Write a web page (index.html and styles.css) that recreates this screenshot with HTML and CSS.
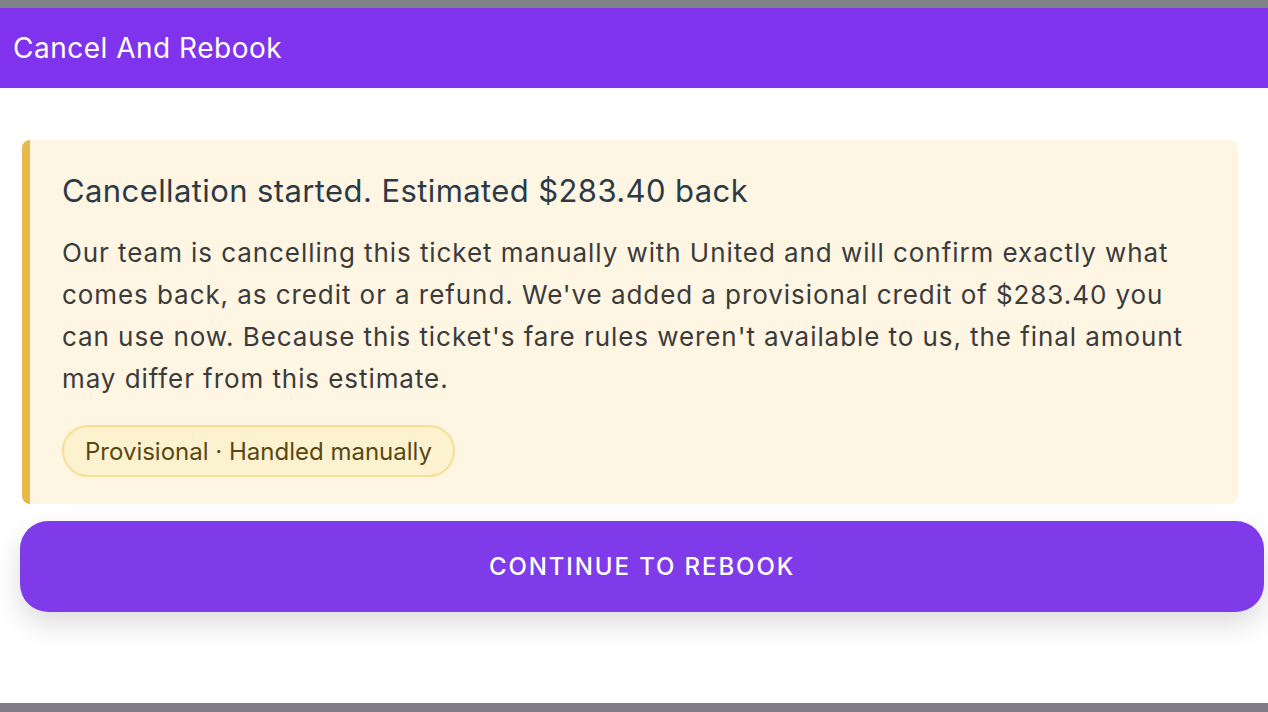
FILE: index.html
```html
<!DOCTYPE html>
<html>
<head>
<meta charset="utf-8">
<link rel="stylesheet" href="styles.css">
</head>
<body>
<div class="backdrop-top"></div>
<div class="sheet">
  <header class="app-bar">
    <h1 class="app-title">Cancel And Rebook</h1>
  </header>
  <main class="content">
    <section class="notice">
      <h2 class="notice-title">Cancellation started. Estimated $283.40 back</h2>
      <p class="notice-body">Our team is cancelling this ticket manually with United and will confirm exactly what comes back, as credit or a refund. We've added a provisional credit of $283.40 you can use now. Because this ticket's fare rules weren't available to us, the final amount may differ from this estimate.</p>
      <span class="chip">Provisional · Handled manually</span>
    </section>
    <div class="footer">
      <button class="primary-btn">CONTINUE TO REBOOK</button>
    </div>
  </main>
</div>
<div class="backdrop-bottom"></div>
</body>
</html>
```

FILE: styles.css
```css
* { box-sizing: border-box; }
html, body { margin: 0; padding: 0; }
body {
  width: 1268px;
  height: 712px;
  overflow: hidden;
  font-family: Inter, "Noto Sans", sans-serif;
  background: #ffffff;
  display: flex;
  flex-direction: column;
}
.backdrop-top {
  height: 8px;
  background: #7f8387;
  flex: none;
}
.sheet {
  height: 695px;
  flex: none;
  background: #ffffff;
  display: flex;
  flex-direction: column;
}
.app-bar {
  height: 80px;
  background: #8033ec;
  display: flex;
  align-items: center;
  padding-left: 13px;
  flex: none;
}
.app-title {
  margin: 0;
  color: #ffffff;
  font-size: 28px;
  font-weight: 400;
  letter-spacing: 0.5px;
}
.content {
  padding: 52px 4px 0 20px;
  display: flex;
  flex-direction: column;
}
.notice {
  margin: 0 26px 0 2px;
  background: #fef6e3;
  border-left: 8px solid #e8b84a;
  border-radius: 8px;
  padding: 30px 32px 27px 32px;
  display: flex;
  flex-direction: column;
  align-items: flex-start;
}
.notice-title {
  margin: 0;
  font-size: 31px;
  font-weight: 400;
  color: #2c3a47;
  line-height: 42px;
  letter-spacing: 0.4px;
}
.notice-body {
  margin: 20px 0 25px;
  font-size: 26px;
  line-height: 42px;
  color: #3b3b3b;
  letter-spacing: 0.93px;
}
.chip {
  display: inline-flex;
  align-items: center;
  height: 52px;
  padding: 0 21px;
  border: 2px solid #f6df93;
  background: #fdf2cf;
  border-radius: 26px;
  font-size: 24px;
  color: #574812;
}
.footer {
  margin-top: 17px;
}
.primary-btn {
  width: 100%;
  height: 91px;
  border: none;
  border-radius: 28px;
  background: #7f3ae9;
  color: #ffffff;
  font-family: Inter, "Noto Sans", sans-serif;
  font-size: 24px;
  font-weight: 500;
  letter-spacing: 1.9px;
  box-shadow: 0 12px 28px rgba(0, 0, 0, 0.14);
}
.backdrop-bottom {
  height: 9px;
  background: #807c87;
  flex: none;
}
```
